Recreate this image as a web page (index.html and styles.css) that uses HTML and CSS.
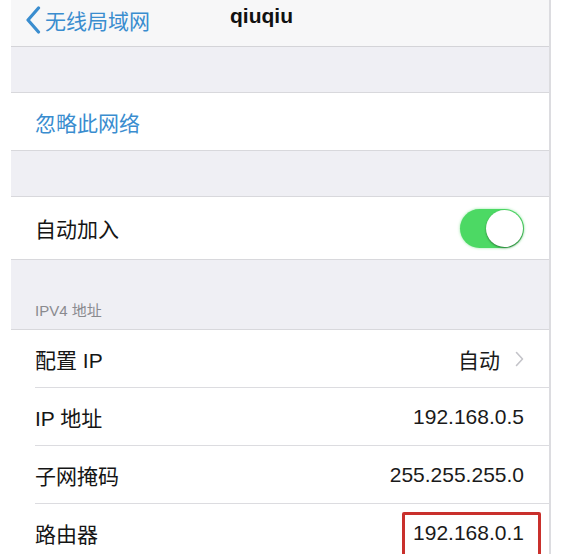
FILE: index.html
```html
<!DOCTYPE html>
<html lang="zh-CN">
<head>
    <meta charset="UTF-8">
    <meta name="viewport" content="width=device-width, initial-scale=1.0">
    <title>qiuqiu</title>
    <link rel="stylesheet" href="styles.css">
</head>
<body>
    <div class="screen">
        <div class="nav-bar">
            <a class="back-link">
                <svg class="back-icon" width="16" height="28" viewBox="0 0 16 28">
                    <polyline points="13.5,2 3,14 13.5,26" fill="none" stroke="#3a8dcf" stroke-width="3.2" stroke-linecap="round" stroke-linejoin="round"/>
                </svg>
                <span>无线局域网</span>
            </a>
            <div class="nav-title">qiuqiu</div>
        </div>

        <div class="gap"></div>

        <div class="group">
            <div class="cell">
                <span class="cell-link">忽略此网络</span>
            </div>
        </div>

        <div class="gap"></div>

        <div class="group">
            <div class="cell cell-tall">
                <span>自动加入</span>
                <div class="switch on"><div class="knob"></div></div>
            </div>
        </div>

        <div class="section-header">IPV4 地址</div>

        <div class="group">
            <div class="cell">
                <span>配置 IP</span>
                <span class="cell-value">自动
                    <svg class="chevron" width="9" height="16" viewBox="0 0 9 16">
                        <polyline points="1.5,1.5 7.5,8 1.5,14.5" fill="none" stroke="#c4c4c9" stroke-width="1.6" stroke-linecap="round" stroke-linejoin="round"/>
                    </svg>
                </span>
            </div>
            <div class="cell">
                <span>IP 地址</span>
                <span class="cell-value">192.168.0.5</span>
            </div>
            <div class="cell">
                <span>子网掩码</span>
                <span class="cell-value">255.255.255.0</span>
            </div>
            <div class="cell">
                <span>路由器</span>
                <span class="cell-value marked">192.168.0.1</span>
            </div>
        </div>
    </div>
</body>
</html>
```

FILE: styles.css
```css
html, body {
    margin: 0;
    height: 554px;
    overflow: hidden;
    background-color: #ffffff;
}

body {
    font-family: "Liberation Sans", "Noto Sans CJK SC", sans-serif;
    color: #151515;
}

.screen {
    margin-left: 11px;
    width: 538px;
    border-right: 2px solid #dcdce0;
    background-color: #efeff4;
}

.nav-bar {
    position: relative;
    height: 46px;
    background-color: #f7f7f8;
    border-bottom: 1px solid #d4d4d8;
    display: flex;
    align-items: center;
}

.back-link {
    display: flex;
    align-items: center;
    gap: 4px;
    padding-left: 14px;
    margin-top: -6px;
    color: #3a8dcf;
    font-size: 21px;
}

.nav-title {
    position: absolute;
    left: 219px;
    top: 4px;
    font-size: 21px;
    font-weight: bold;
    color: #111;
}

.gap {
    height: 45px;
}

.group {
    background-color: #ffffff;
    border-top: 1px solid #d8d8dc;
    border-bottom: 1px solid #d8d8dc;
}

.cell {
    height: 57px;
    margin-left: 24px;
    padding-right: 25px;
    display: flex;
    align-items: center;
    justify-content: space-between;
    font-size: 21px;
    border-bottom: 1px solid #dcdce0;
}

.cell:last-child {
    border-bottom: none;
}

.cell-tall {
    height: 62px;
}

.cell-link {
    color: #3a8dcf;
}

.cell-value {
    display: flex;
    align-items: center;
    gap: 15px;
    color: #1a1a1a;
}

.switch {
    width: 64px;
    height: 39px;
    border-radius: 20px;
    background-color: #4cd964;
    position: relative;
    box-shadow: 0 0 3px rgba(76, 217, 100, 0.6);
}

.knob {
    position: absolute;
    right: 1px;
    top: 1px;
    width: 37px;
    height: 37px;
    border-radius: 50%;
    background-color: #ffffff;
    box-shadow: 0 1px 2px rgba(0, 0, 0, 0.45);
}

.section-header {
    height: 69px;
    box-sizing: border-box;
    padding: 39px 0 0 24px;
    font-size: 15px;
    color: #8a8a8f;
}

.marked {
    position: relative;
}

.marked::after {
    content: "";
    position: absolute;
    left: -11px;
    right: -17px;
    top: -9px;
    height: 70px;
    border: 3px solid #c9302c;
    border-radius: 2px;
}
```
